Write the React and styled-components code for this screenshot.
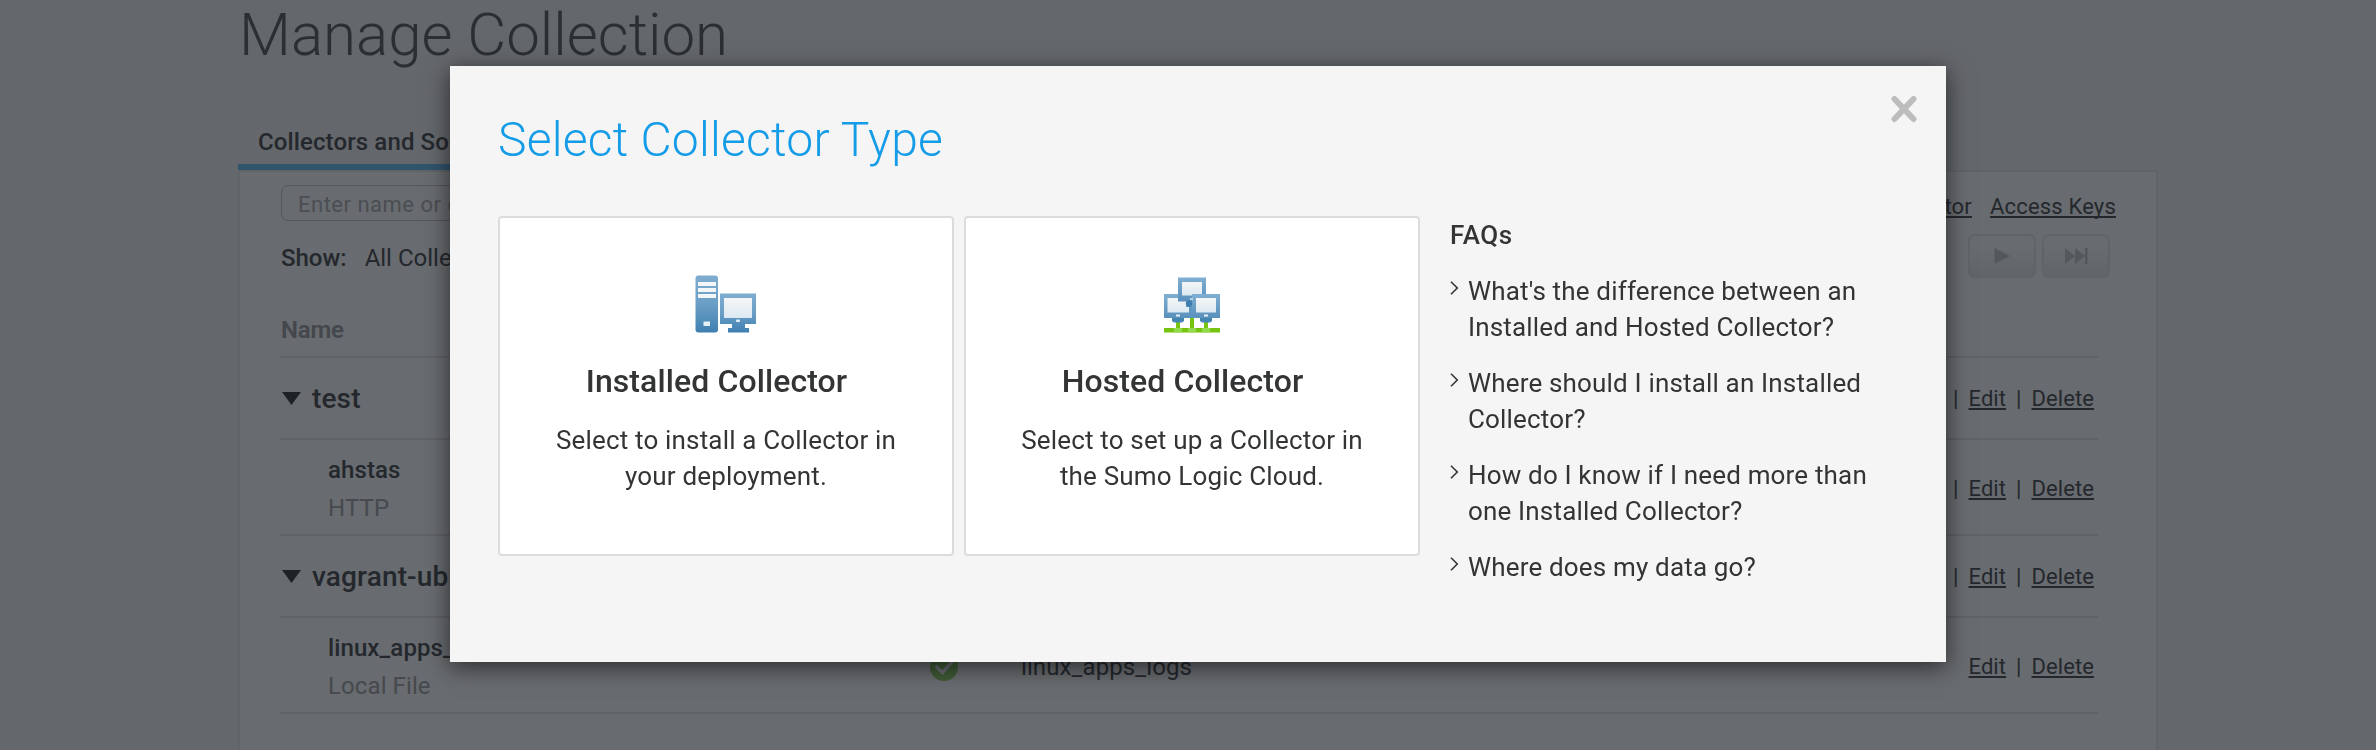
import React from "react";
import styled, { createGlobalStyle, css } from "styled-components";

const GlobalStyle = createGlobalStyle`
  *, *::before, *::after { box-sizing: border-box; }
  html, body { margin: 0; padding: 0; }
  body {
    font-family: Roboto, "Liberation Sans", sans-serif;
    background: #64676b;
    color: #24282d;
    overflow: hidden;
  }
  h1, h2, h3, p, ul { margin: 0; padding: 0; }
`;

const Page = styled.div`
  height: 100vh;
  overflow: hidden;
  display: flex;
  flex-direction: column;
  padding: 0 218px 0 238px;
`;

const PageTitle = styled.h1`
  height: 112px;
  padding-left: 1px;
  font-size: 60px;
  line-height: 70px;
  font-weight: 300;
  color: #2b2f33;
`;

const TabBar = styled.nav`
  display: flex;
  height: 58px;
`;

const Tab = styled.a`
  width: 286px;
  padding: 0 20px;
  border-bottom: 6px solid #30546c;
  font-size: 24px;
  line-height: 60px;
  font-weight: 500;
  letter-spacing: 0.12px;
  white-space: nowrap;
`;

const Panel = styled.main`
  flex: 1;
  width: 1920px;
  padding: 13px 40px 0;
  border: 2px solid #606368;
  border-bottom: 0;
  background: #686b6f;
`;

const Toolbar = styled.div`
  display: flex;
  justify-content: space-between;
  height: 49px;
  width: 1836px;
  padding-left: 1px;
`;

const Search = styled.div`
  width: 420px;
  height: 36px;
  padding: 0 16px;
  border: 1px solid #54575b;
  border-radius: 7px;
  font-size: 22px;
  line-height: 37px;
  letter-spacing: 0.5px;
  color: #4b4e52;
`;

const Links = styled.div`
  display: flex;
  gap: 18px;
  font-size: 22px;
  line-height: 43px;
  letter-spacing: 0.18px;
`;

const Link = styled.a`
  white-space: pre;
  text-decoration: underline;
  text-decoration-thickness: 2px;
  text-underline-offset: 2px;
  text-decoration-skip-ink: none;
`;

const Filters = styled.div`
  display: flex;
  justify-content: space-between;
  width: 1830px;
  height: 72px;
  padding-left: 1px;
  font-size: 24px;
  line-height: 48px;
`;

const Filter = styled.div`
  display: flex;
  gap: 18px;
`;

const Strong = styled.span`
  font-weight: 500;
`;

const Pager = styled.div`
  display: flex;
  gap: 6px;
`;

const PagerButton = styled.button`
  display: flex;
  align-items: center;
  justify-content: center;
  width: 68px;
  height: 44px;
  padding: 0;
  border: 2px solid #606367;
  border-radius: 7px;
  background: linear-gradient(#686b6f 30%, #616468);
`;

const Table = styled.div`
  width: 1818px;
`;

const Row = styled.div`
  display: grid;
  grid-template-columns: 650px 91px 1fr auto;
  align-items: center;
  height: ${(p) => p.$height}px;
  padding-right: 4px;
  border-bottom: 2px solid #5f6266;
`;

const HeadCell = styled.div`
  padding-left: 1px;
  font-size: 24px;
  line-height: 28px;
  font-weight: 600;
  letter-spacing: -0.2px;
  color: #44474b;
  padding-bottom: 3px;
`;

const GroupName = styled.div`
  display: flex;
  align-items: center;
  gap: 11px;
  padding: 2px 0 0 2px;
  font-size: 28px;
  line-height: 34px;
  font-weight: 500;
  letter-spacing: 0.15px;
`;

const SourceName = styled.div`
  display: flex;
  flex-direction: column;
  padding: 3px 0 0 48px;
  font-size: 24px;
  line-height: 38px;
  font-weight: 500;
  letter-spacing: 0.1px;
`;

const SourceKind = styled.span`
  font-weight: 400;
  color: #46494d;
`;

const Status = styled.div`
  display: flex;
  padding-top: 4px;
`;

const Category = styled.div`
  font-size: 24px;
  line-height: 28px;
  padding-top: 3px;
  letter-spacing: 0.1px;
`;

const Actions = styled.div`
  grid-column: 4;
  display: flex;
  gap: 10px;
  font-size: 22px;
  line-height: 28px;
  letter-spacing: 0.08px;
  padding-top: ${(p) => p.$shift}px;
`;

const Overlay = styled.div`
  position: fixed;
  inset: 0;
  padding: 66px 430px 0 450px;
`;

const Dialog = styled.section`
  display: flex;
  flex-direction: column;
  height: 596px;
  padding: 0 29px 0 48px;
  background: #f5f5f5;
  box-shadow: 0 5px 22px rgba(0, 0, 0, 0.6);
  color: #333435;
`;

const DialogHeader = styled.header`
  display: flex;
  justify-content: space-between;
  height: 150px;
`;

const DialogTitle = styled.h2`
  padding-top: 46px;
  font-size: 48px;
  line-height: 56px;
  font-weight: 300;
  letter-spacing: 0.24px;
  color: #149ce8;
`;

const CloseButton = styled.button`
  display: flex;
  align-self: flex-start;
  margin-top: 29px;
  padding: 0;
  border: 0;
  background: none;
`;

const DialogBody = styled.div`
  display: flex;
  gap: 10px;
`;

const Card = styled.article`
  display: flex;
  flex-direction: column;
  align-items: center;
  width: 456px;
  height: 340px;
  padding-top: 57px;
  border: 2px solid #dcdcdc;
  border-radius: 4px;
  background: #fff;
`;

const CardTitle = styled.h3`
  margin-top: 26px;
  padding-right: 19px;
  font-size: 32px;
  line-height: 40px;
  font-weight: 500;
  letter-spacing: 0.1px;
`;

const bodyText = css`
  font-size: 26px;
  line-height: 36px;
  letter-spacing: 0.17px;
`;

const CardText = styled.p`
  ${bodyText}
  width: 380px;
  margin-top: 21px;
  text-align: center;
`;

const Faqs = styled.aside`
  padding: 1px 0 0 20px;
`;

const FaqTitle = styled.h3`
  ${bodyText}
  font-weight: 500;
  letter-spacing: 0.6px;
  margin-bottom: 20px;
`;

const FaqList = styled.ul`
  display: flex;
  flex-direction: column;
  gap: 20px;
  list-style: none;
`;

const FaqItem = styled.li`
  ${bodyText}
  display: flex;
  gap: 9px;
  width: 440px;
`;

const Chevron = styled.svg`
  flex: none;
  margin-top: 8px;
`;

const FAQS = [
  ["What's the difference between an", "Installed and Hosted Collector?"],
  ["Where should I install an Installed", "Collector?"],
  ["How do I know if I need more than", "one Installed Collector?"],
  ["Where does my data go?"],
];

const lines = (parts) =>
  parts.map((t, i) => (
    <React.Fragment key={t}>
      {i > 0 && <br />}
      {t}
    </React.Fragment>
  ));

const Triangle = () => (
  <svg width="19" height="14" viewBox="0 0 19 14">
    <path d="M0 0H19L9.500 13Z" fill="#1e2126" />
  </svg>
);

const Check = () => (
  <svg width="28" height="28" viewBox="0 0 28 28">
    <circle cx="14" cy="14" r="14" fill="#3f5a35" />
    <path d="M5.500 13l7 6.500 10-11" fill="none" stroke="#686b6f" strokeWidth="3.500" />
  </svg>
);

const InstalledIcon = () => (
  <svg width="62" height="60" viewBox="0 0 62 60">
    <defs>
      <linearGradient id="tower" x1="0" y1="0" x2="0" y2="1">
        <stop offset="0" stopColor="#7fadd0" />
        <stop offset="0.5" stopColor="#6a9fc6" />
        <stop offset="1" stopColor="#3f7fb0" />
      </linearGradient>
      <linearGradient id="glass" x1="0" y1="0" x2="0" y2="1">
        <stop offset="0" stopColor="#f4f6f6" />
        <stop offset="1" stopColor="#dce9f2" />
      </linearGradient>
    </defs>
    <rect x="0.500" y="0.500" width="22.500" height="57" rx="3" fill="url(#tower)" />
    <path d="M3 7h18v4H3zM3 13h18v4H3zM3 19h18v4H3z" fill="#f3f7fa" />
    <rect x="8.500" y="46.500" width="6.500" height="4.500" fill="#e4f0f7" />
    <path d="M25 18.500h36v30.500H50v4h4v4.500H33v-4.500h4v-4H25z" fill="url(#tower)" />
    <rect x="29" y="23" width="28" height="20" fill="url(#glass)" />
    <rect x="41" y="44.500" width="4" height="2.500" rx="1" fill="#e4f0f7" />
  </svg>
);

const HostedIcon = () => (
  <svg width="58" height="60" viewBox="0 0 58 60">
    <defs>
      <linearGradient id="frame" x1="0" y1="0" x2="0" y2="1">
        <stop offset="0" stopColor="#7fafd2" />
        <stop offset="1" stopColor="#5a90bc" />
      </linearGradient>
    </defs>
    <path d="M13 47h4v8h-4zM27 42h4v13h-4zM41 47h4v8h-4z" fill="#74c410" />
    <rect x="1" y="53" width="56" height="4.500" fill="#74c410" />
    <path d="M11 53h8v4.500h-8zM25 53h8v4.500h-8zM39 53h8v4.500h-8z" fill="#95d94d" />
    <rect x="1" y="19" width="28" height="24" fill="url(#frame)" />
    <rect x="4.500" y="23" width="22" height="14.500" fill="url(#glass)" />
    <rect x="15" y="2.500" width="28" height="24" fill="url(#frame)" />
    <rect x="19" y="7" width="20" height="13.500" fill="url(#glass)" />
    <rect x="29" y="19" width="28" height="24" fill="url(#frame)" />
    <path d="M24 23h5v15h-3v-6h-3z" fill="#5f97c2" />
    <circle cx="26" cy="28.500" r="3.200" fill="#3e7eae" />
    <rect x="33" y="23" width="20" height="14.500" fill="url(#glass)" />
    <path d="M9 43h12v3l-2 1.500H11l-2-1.500zM37 43h12v3l-2 1.500H39l-2-1.500z" fill="#4585b4" />
    <rect x="13" y="39.500" width="4" height="2" fill="#e4f0f7" />
    <rect x="41" y="39.500" width="4" height="2" fill="#e4f0f7" />
    <rect x="27" y="23" width="3" height="2" fill="#b9d3e5" />
  </svg>
);

const RowActions = ({ items, leadingBar, shift }) => (
  <Actions $shift={shift}>
    {items.map((label, i) => (
      <React.Fragment key={label}>
        {(i > 0 || leadingBar) && <span>|</span>}
        <Link>{label}</Link>
      </React.Fragment>
    ))}
  </Actions>
);

const Group = ({ name }) => (
  <Row $height={82}>
    <GroupName>
      <Triangle />
      {name}
    </GroupName>
    <RowActions items={["Add ", "Edit", "Delete"]} shift={2} />
  </Row>
);

const Source = ({ name, kind, category, leadingBar }) => (
  <Row $height={96}>
    <SourceName>
      {name}
      <SourceKind>{kind}</SourceKind>
    </SourceName>
    <Status>{category && <Check />}</Status>
    <Category>{category}</Category>
    <RowActions items={["Edit", "Delete"]} leadingBar={leadingBar} shift={3} />
  </Row>
);

export default function App() {
  return (
    <>
      <GlobalStyle />
      <Page>
        <PageTitle>Manage Collection</PageTitle>
        <TabBar>
          <Tab>Collectors and Sources</Tab>
        </TabBar>
        <Panel>
          <Toolbar>
            <Search>Enter name or category</Search>
            <Links>
              <Link>Collector</Link>
              <Link>Access Keys</Link>
            </Links>
          </Toolbar>
          <Filters>
            <Filter>
              <Strong>Show:</Strong>
              <span>All Collectors</span>
            </Filter>
            <Pager>
              <PagerButton>
                <svg width="16" height="16" viewBox="0 0 16 16">
                  <path d="M0.500 0L16 8 0.500 16Z" fill="#54575b" />
                </svg>
              </PagerButton>
              <PagerButton>
                <svg width="23" height="16" viewBox="0 0 23 16">
                  <path d="M0 0L10 8 0 16ZM10 0L20 8 10 16ZM20 0h2.500v16H20Z" fill="#54575b" />
                </svg>
              </PagerButton>
            </Pager>
          </Filters>
          <Table>
            <Row $height={52}>
              <HeadCell>Name</HeadCell>
            </Row>
            <Group name="test" />
            <Source name="ahstas" kind="HTTP" leadingBar />
            <Group name="vagrant-ubuntu" />
            <Source name="linux_apps_logs" kind="Local File" category="linux_apps_logs" />
          </Table>
        </Panel>
      </Page>
      <Overlay>
        <Dialog>
          <DialogHeader>
            <DialogTitle>Select Collector Type</DialogTitle>
            <CloseButton aria-label="Close">
              <svg width="26" height="28" viewBox="0 0 26 28">
                <path
                  d="M3.500 4L22.500 24M22.500 4L3.500 24"
                  stroke="#bdbdbd"
                  strokeWidth="6"
                  strokeLinecap="round"
                />
              </svg>
            </CloseButton>
          </DialogHeader>
          <DialogBody>
            <Card>
              <InstalledIcon />
              <CardTitle>Installed Collector</CardTitle>
              <CardText>{lines(["Select to install a Collector in", "your deployment."])}</CardText>
            </Card>
            <Card>
              <HostedIcon />
              <CardTitle>Hosted Collector</CardTitle>
              <CardText>{lines(["Select to set up a Collector in", "the Sumo Logic Cloud."])}</CardText>
            </Card>
            <Faqs>
              <FaqTitle>FAQs</FaqTitle>
              <FaqList>
                {FAQS.map((faq) => (
                  <FaqItem key={faq[0]}>
                    <Chevron width="9" height="14" viewBox="0 0 9 14">
                      <path d="M1 0.700L7.300 7 1 13.300" fill="none" stroke="#333435" strokeWidth="1.600" />
                    </Chevron>
                    <span>{lines(faq)}</span>
                  </FaqItem>
                ))}
              </FaqList>
            </Faqs>
          </DialogBody>
        </Dialog>
      </Overlay>
    </>
  );
}
